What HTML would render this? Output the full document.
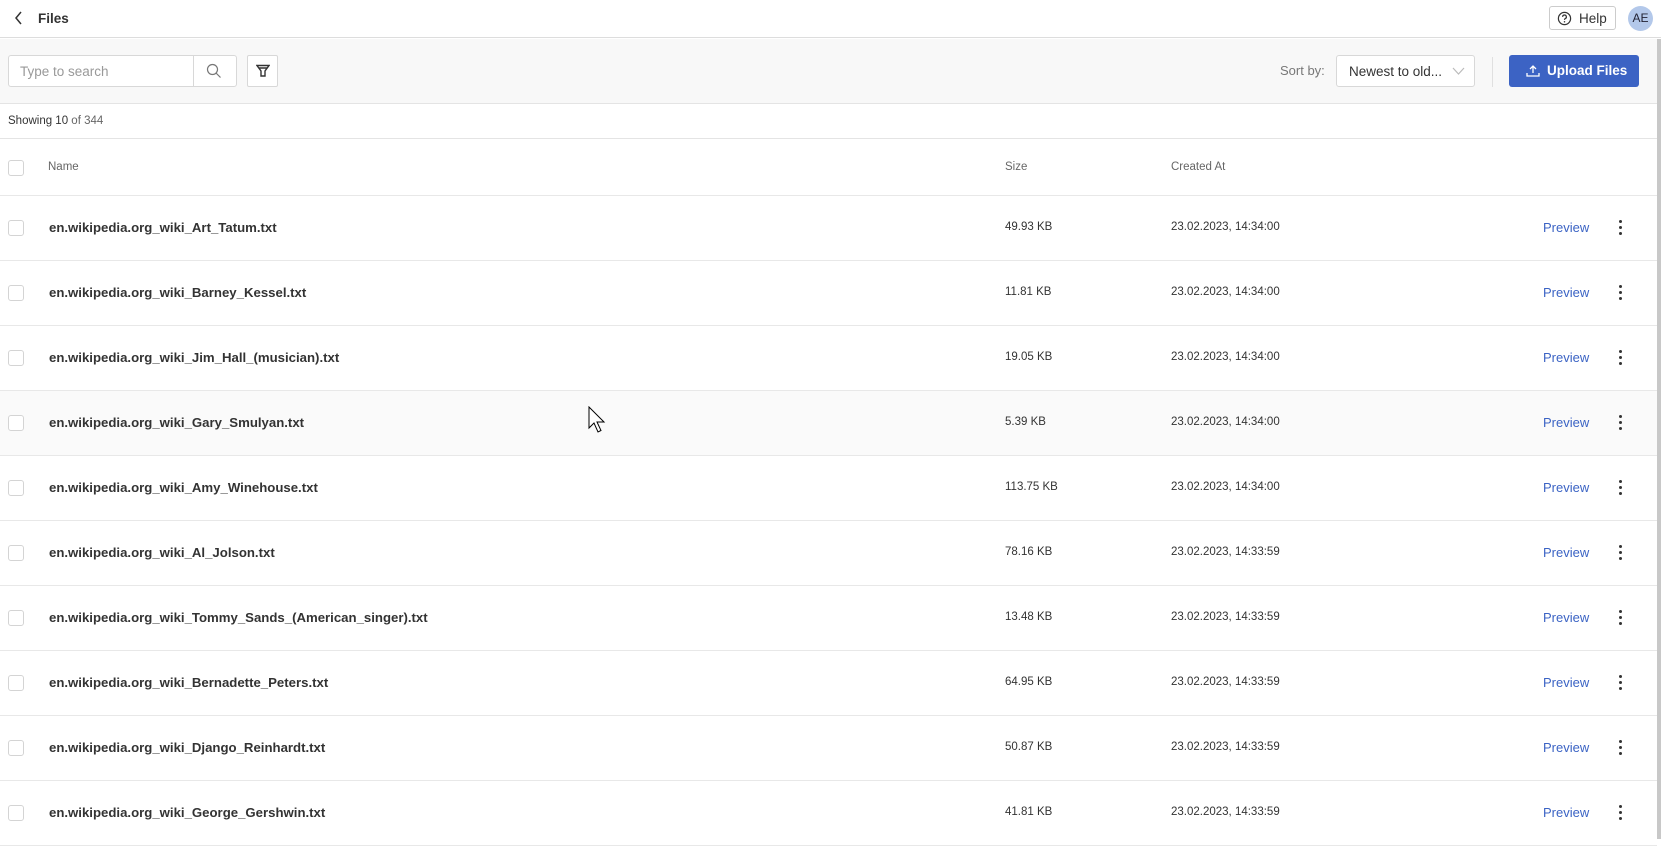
<!DOCTYPE html>
<html><head><meta charset="utf-8"><style>
*{box-sizing:border-box;margin:0;padding:0}
body{width:1661px;height:839px;overflow:hidden;background:#fff;font-family:"Liberation Sans",sans-serif;color:#222;position:relative}
.abs{position:absolute}
.top{left:0;top:0;width:1661px;height:38px;border-bottom:1px solid #ddd;background:#fff}
.tool{left:0;top:39px;width:1657px;height:65px;background:#f8f8f8;border-bottom:1px solid #e4e4e4}
.cb{position:absolute;left:8px;width:16px;height:16px;border:1px solid #d4d4d4;border-radius:3px;background:#fff}
.row{position:absolute;left:0;width:1657px;height:65px;border-bottom:1px solid #e8e8e8}
.nm{position:absolute;left:49px;font-weight:bold;font-size:13.2px;color:#333}
.sz{position:absolute;left:1005px;font-size:11.5px;color:#333}
.dt{position:absolute;left:1171px;font-size:11.5px;color:#333}
.pv{position:absolute;left:1543px;font-size:13px;color:#3b63c4}
.dots{position:absolute;left:1619px;width:4px}
.dots i{display:block;width:3px;height:3px;border-radius:50%;background:#333;margin-bottom:3px}
</style></head><body>
<div class="abs top">
  <svg class="abs" style="left:14px;top:11px" width="10" height="14" viewBox="0 0 10 14"><path d="M7 1 L2 7 L7 13" stroke="#333" stroke-width="1.5" fill="none"/></svg>
  <div class="abs" style="left:38px;top:11px;font-size:13.5px;font-weight:bold;color:#333">Files</div>
  <div class="abs" style="left:1549px;top:6px;width:67px;height:24px;border:1px solid #ccc;border-radius:3px;background:#fff">
    <svg class="abs" style="left:7px;top:4px" width="15" height="15" viewBox="0 0 16 16"><circle cx="8" cy="8" r="6.5" stroke="#333" stroke-width="1.3" fill="none"/><path d="M6 6.3a2 2 0 1 1 2.8 1.8c-.6.3-.8.6-.8 1.3" stroke="#333" stroke-width="1.3" fill="none"/><circle cx="8" cy="11.5" r=".8" fill="#333"/></svg>
    <span class="abs" style="left:29px;top:4px;font-size:13.5px;color:#333">Help</span>
  </div>
  <div class="abs" style="left:1628px;top:6px;width:25px;height:25px;border-radius:50%;background:#b3c8ea;font-size:12px;color:#223;text-align:center;line-height:25px">AE</div>
</div>
<div class="abs tool">
  <div class="abs" style="left:8px;top:16px;width:229px;height:32px;border:1px solid #d8d8d8;border-radius:3px;background:#fff">
    <span class="abs" style="left:11px;top:8px;font-size:13.5px;color:#999">Type to search</span>
    <div class="abs" style="left:184px;top:0;width:1px;height:30px;background:#d8d8d8"></div>
    <svg class="abs" style="left:197px;top:7px" width="16" height="16" viewBox="0 0 16 16"><circle cx="6.5" cy="6.5" r="5" stroke="#777" stroke-width="1.2" fill="none"/><path d="M10 10l4.5 4.5" stroke="#777" stroke-width="1.2"/></svg>
  </div>
  <div class="abs" style="left:247px;top:16px;width:31px;height:32px;border:1px solid #d8d8d8;border-radius:2px;background:#fff">
    <svg class="abs" style="left:8px;top:8px" width="14" height="14" viewBox="0 0 14 14"><path d="M1 1.5h12L9 7v5H5V7z M3 4h8" stroke="#333" stroke-width="1.4" fill="none"/></svg>
  </div>
  <span class="abs" style="left:1280px;top:24px;font-size:13px;color:#777">Sort by:</span>
  <div class="abs" style="left:1336px;top:16px;width:139px;height:32px;border:1px solid #d8d8d8;border-radius:3px;background:#fff">
    <span class="abs" style="left:12px;top:8px;font-size:13.5px;color:#333">Newest to old...</span>
    <svg class="abs" style="left:115px;top:11px" width="13" height="8" viewBox="0 0 13 8"><path d="M1 1l5.5 6L12 1" stroke="#bbb" stroke-width="1.2" fill="none"/></svg>
  </div>
  <div class="abs" style="left:1492px;top:18px;width:1px;height:30px;background:#e0e0e0"></div>
  <div class="abs" style="left:1509px;top:16px;width:130px;height:32px;border-radius:3px;background:#3c63c4;color:#fff;font-size:13.5px;font-weight:bold">
    <svg class="abs" style="left:17px;top:9px" width="14" height="13" viewBox="0 0 14 13"><path d="M7 9V2M4 5l3-3 3 3M1 9v3h12V9" stroke="#fff" stroke-width="1.3" fill="none"/></svg>
    <span class="abs" style="left:38px;top:8px">Upload Files</span>
  </div>
</div>
<div class="abs" style="left:1657px;top:39px;width:4px;height:800px;background:#c8c8c8"></div>
<div class="abs" style="left:0;top:104px;width:1657px;height:35px;border-bottom:1px solid #e4e4e4">
  <span class="abs" style="left:8px;top:11px;font-size:11.5px;color:#333">Showing 10 <span style="color:#666">of 344</span></span>
</div>
<div class="row" style="top:139px;height:57px">
  <div class="cb" style="top:21px"></div>
  <span class="abs" style="left:48px;top:22px;font-size:11.5px;color:#666">Name</span>
  <span class="abs" style="left:1005px;top:22px;font-size:11.5px;color:#666">Size</span>
  <span class="abs" style="left:1171px;top:22px;font-size:11.5px;color:#666">Created At</span>
</div>
<div id="rows"></div>
<svg class="abs" style="left:588px;top:406px" width="20" height="28" viewBox="0 0 20 28"><path d="M1 1v21l5-5 4 9 3-1.5-4-8.5h7z" fill="#fff" stroke="#000" stroke-width="1"/></svg>
<script>
var d=[["Art_Tatum","49.93 KB","14:34:00"],["Barney_Kessel","11.81 KB","14:34:00"],["Jim_Hall_(musician)","19.05 KB","14:34:00"],["Gary_Smulyan","5.39 KB","14:34:00"],["Amy_Winehouse","113.75 KB","14:34:00"],["Al_Jolson","78.16 KB","14:33:59"],["Tommy_Sands_(American_singer)","13.48 KB","14:33:59"],["Bernadette_Peters","64.95 KB","14:33:59"],["Django_Reinhardt","50.87 KB","14:33:59"],["George_Gershwin","41.81 KB","14:33:59"]];
var h="";d.forEach(function(r,i){var t=196+i*65;h+='<div class="row" style="top:'+t+'px;'+(i==3?'background:#fafafa':'')+'"><div class="cb" style="top:24px"></div><span class="nm" style="top:24px">en.wikipedia.org_wiki_'+r[0]+'.txt</span><span class="sz" style="top:25px">'+r[1]+'</span><span class="dt" style="top:25px">23.02.2023, '+r[2]+'</span><span class="pv" style="top:24px">Preview</span><div class="dots" style="top:24px"><i></i><i></i><i></i></div></div>';});
document.getElementById("rows").innerHTML=h;
</script>
</body></html>
